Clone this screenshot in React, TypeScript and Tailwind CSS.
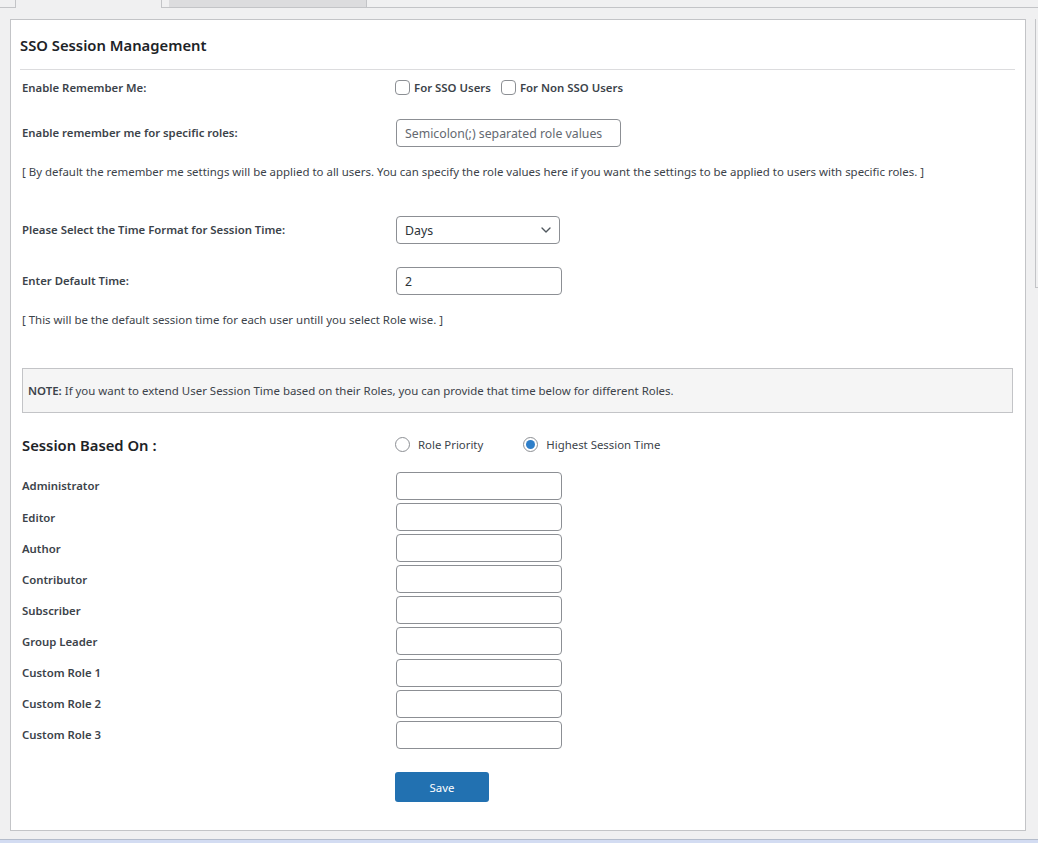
import React from "react";
import { ChevronDown } from "lucide-react";

const roles: string[] = [
  "Administrator",
  "Editor",
  "Author",
  "Contributor",
  "Subscriber",
  "Group Leader",
  "Custom Role 1",
  "Custom Role 2",
  "Custom Role 3",
];

const inputClass =
  "w-[166px] h-[28px] rounded-[4px] border border-[#8c8f94] bg-white px-2 text-[12.3px] text-[#2c3338] outline-none";

const labelClass = "w-[374px] text-[11.35px] font-semibold text-[#3c434a]";

const Check: React.FC<{ label: string }> = ({ label }) => (
  <label className="flex items-center gap-1 text-[11.4px] font-semibold text-[#3c434a]">
    <input
      type="checkbox"
      className="w-[15px] h-[15px] appearance-none rounded-[4px] border border-[#8c8f94] bg-white"
    />
    {label}
  </label>
);

const Radio: React.FC<{ label: string; checked?: boolean }> = ({ label, checked }) => (
  <label className="flex items-center gap-2 text-[11.4px] text-[#3c434a]">
    <span className="flex items-center justify-center w-[15px] h-[15px] rounded-full border border-[#8c8f94] bg-white">
      {checked && <span className="w-[9px] h-[9px] rounded-full bg-[#2f7fc9]" />}
    </span>
    {label}
  </label>
);

export default function App() {
  return (
    <div className="w-[1038px] h-[843px] overflow-hidden bg-[#f0f0f1] font-['Noto_Sans','Open_Sans',sans-serif] flex flex-col">
      {/* tabs strip */}
      <div className="flex h-[8px] shrink-0 border-b border-[#c3c4c7]">
        <div className="ml-[15px] w-[147px] h-[8px] border-l border-r border-[#c3c4c7] bg-[#f0f0f1]" />
        <div className="ml-[7px] w-[198px] h-[7px] bg-[#dcdcde] border-r border-[#c3c4c7]" />
      </div>

      <div className="flex flex-1 mt-[11px] pl-[10px] items-start">
        {/* main card */}
        <div className="w-[1016px] h-[812px] shrink-0 border border-[#c3c4c7] bg-white pl-[9px] pr-[10px] pt-[15px]">
          <h2 className="h-[20px] leading-[20px] text-[14.8px] font-semibold text-[#1d2327]">
            SSO Session Management
          </h2>
          <div className="mt-[14px] h-[1px] bg-[#dcdcde]" />

          <div className="pl-[2px]">
            <div className="mt-[9px] flex items-center h-[18px]">
              <div className="w-[373px] text-[11.35px] font-semibold text-[#3c434a]">Enable Remember Me:</div>
              <div className="flex items-center gap-[10px]">
                <Check label="For SSO Users" />
                <Check label="For Non SSO Users" />
              </div>
            </div>

            <div className="mt-[22px] flex items-center">
              <div className={labelClass}>Enable remember me for specific roles:</div>
              <input
                className="w-[225px] h-[28px] rounded-[4px] border border-[#8c8f94] bg-white px-2 text-[12.3px] placeholder:text-[#646970] outline-none"
                placeholder="Semicolon(;) separated role values"
              />
            </div>

            <p className="mt-[16px] h-[18px] leading-[18px] text-[11.45px] text-[#3c434a]">
              [ By default the remember me settings will be applied to all users. You can specify the role values here if you want the settings to be applied to users with specific roles. ]
            </p>

            <div className="mt-[35px] flex items-center">
              <div className={labelClass}>Please Select the Time Format for Session Time:</div>
              <div className="w-[164px] h-[28px] rounded-[4px] border border-[#8c8f94] bg-white pl-2 pr-[5px] flex items-center justify-between text-[12.3px] text-[#2c3338]">
                <span className="mt-[2px]">Days</span>
                <ChevronDown size={16} strokeWidth={2} className="text-[#50575e]" />
              </div>
            </div>

            <div className="mt-[23px] flex items-center">
              <div className={labelClass}>Enter Default Time:</div>
              <input className={inputClass} defaultValue="2" />
            </div>

            <p className="mt-[16px] h-[18px] leading-[18px] text-[11.45px] text-[#3c434a]">
              [ This will be the default session time for each user untill you select Role wise. ]
            </p>

            <div className="mt-[39px] w-[991px] h-[45px] border border-[#c3c4c7] bg-[#f5f5f5] pl-[5px] flex items-center text-[11.45px] text-[#3c434a]">
              <span>
                <b className="font-semibold">NOTE:</b> If you want to extend User Session Time based on their Roles, you can provide that time below for different Roles.
              </span>
            </div>

            <div className="mt-[21px] flex items-center h-[22px]">
              <div className="w-[373px] text-[14.8px] font-semibold text-[#1d2327]">Session Based On :</div>
              <div className="flex items-center gap-[40px]">
                <Radio label="Role Priority" />
                <Radio label="Highest Session Time" checked />
              </div>
            </div>

            <div className="mt-[16px] flex flex-col gap-[3.1px]">
              {roles.map((role: string) => (
                <div key={role} className="flex items-center">
                  <div className={labelClass}>{role}</div>
                  <input className={inputClass} />
                </div>
              ))}
            </div>

            <button className="mt-[23px] ml-[373px] w-[94px] h-[30px] rounded-[3px] bg-[#2271b1] pt-[1px] text-[11.4px] text-white">
              Save
            </button>
          </div>
        </div>

        {/* side panel edge */}
        <div className="ml-[9px] w-[3px] h-[269px] border-l border-b border-[#c3c4c7]" />
      </div>

      <div className="h-[4px] shrink-0 border-t border-[#b4bccb] bg-[#d3dcf2]" />
    </div>
  );
}
